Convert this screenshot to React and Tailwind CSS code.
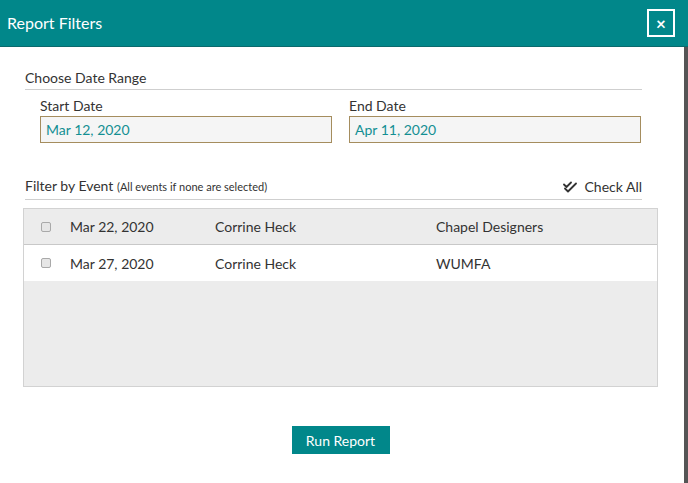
import React from "react";

const rows = [
  { date: "Mar 22, 2020", name: "Corrine Heck", event: "Chapel Designers" },
  { date: "Mar 27, 2020", name: "Corrine Heck", event: "WUMFA" },
];

function DateField({ label, value }) {
  return (
    <div className="flex-1">
      <label className="block text-[14px] leading-[18px] text-[#333]">{label}</label>
      <div className="mt-[1px] h-[27px] border border-[#a58d5e] bg-[#f5f5f5] px-[5px] text-[14px] leading-[25px] text-[#138f93]">
        {value}
      </div>
    </div>
  );
}

export default function App() {
  return (
    <div
      className="flex h-[483px] w-[688px] flex-col overflow-hidden bg-white"
      style={{ fontFamily: "Lato, 'Open Sans', sans-serif" }}
    >
      <header className="flex h-[47px] shrink-0 items-center justify-between border-b border-[#0b6a6d] bg-[#01878a] pl-[7px] pr-[13px]">
        <h1 className="text-[16px] font-normal text-white">Report Filters</h1>
        <button className="flex h-[28px] w-[28px] items-center justify-center border-2 border-white text-[17px] font-bold leading-none text-white">
          ×
        </button>
      </header>

      <div className="flex flex-1">
        <main className="flex-1 pl-[25px] pr-[26px]">
          <div className="mr-[16px] mt-[22px] border-b border-[#cfcfcf] pb-[2px] text-[14px] leading-[18px] text-[#333]">
            Choose Date Range
          </div>

          <div className="mr-[17px] mt-[7px] flex gap-[17px] pl-[15px]">
            <DateField label="Start Date" value="Mar 12, 2020" />
            <DateField label="End Date" value="Apr 11, 2020" />
          </div>

          <div className="mr-[16px] mt-[34px] flex items-end justify-between border-b border-[#cfcfcf] pb-[3px] text-[#333]">
            <div className="text-[14px] leading-[18px]">
              Filter by Event{" "}
              <span className="text-[11px]">(All events if none are selected)</span>
            </div>
            <div className="flex items-center gap-[7px] text-[14px] leading-[18px]">
              <svg width="14" height="12" viewBox="0 0 14 12" fill="none" stroke="#333" strokeWidth="1.8" strokeLinecap="round" strokeLinejoin="round">
                <path d="M1 3.5l2.5 2.5L8 1.5" />
                <path d="M2 7.5l3 3L13 2.5" />
              </svg>
              Check All
            </div>
          </div>

          <div className="-ml-[2px] mt-[8px] h-[179px] border border-[#d2d2d2] bg-[#ececec]">
            {rows.map((r, i) => (
              <div
                key={r.date}
                className={`flex h-[36px] items-center text-[14px] text-[#333] ${
                  i === 0 ? "border-b border-[#c8c8c8] bg-[#ececec]" : "bg-white"
                }`}
              >
                <div className="flex w-[46px] pl-[17px]">
                  <span className="block h-[10px] w-[10px] rounded-[2px] border border-[#a9a9a9] bg-[#e6e6e6]" />
                </div>
                <div className="w-[145px]">{r.date}</div>
                <div className="w-[221px]">{r.name}</div>
                <div>{r.event}</div>
              </div>
            ))}
          </div>

          <div className="mt-[39px] flex justify-center pr-[2px]">
            <button className="h-[28px] w-[98px] bg-[#01878a] text-[14px] text-white">
              Run Report
            </button>
          </div>
        </main>
        <div className="w-[4px] bg-[#555]" />
      </div>
    </div>
  );
}
